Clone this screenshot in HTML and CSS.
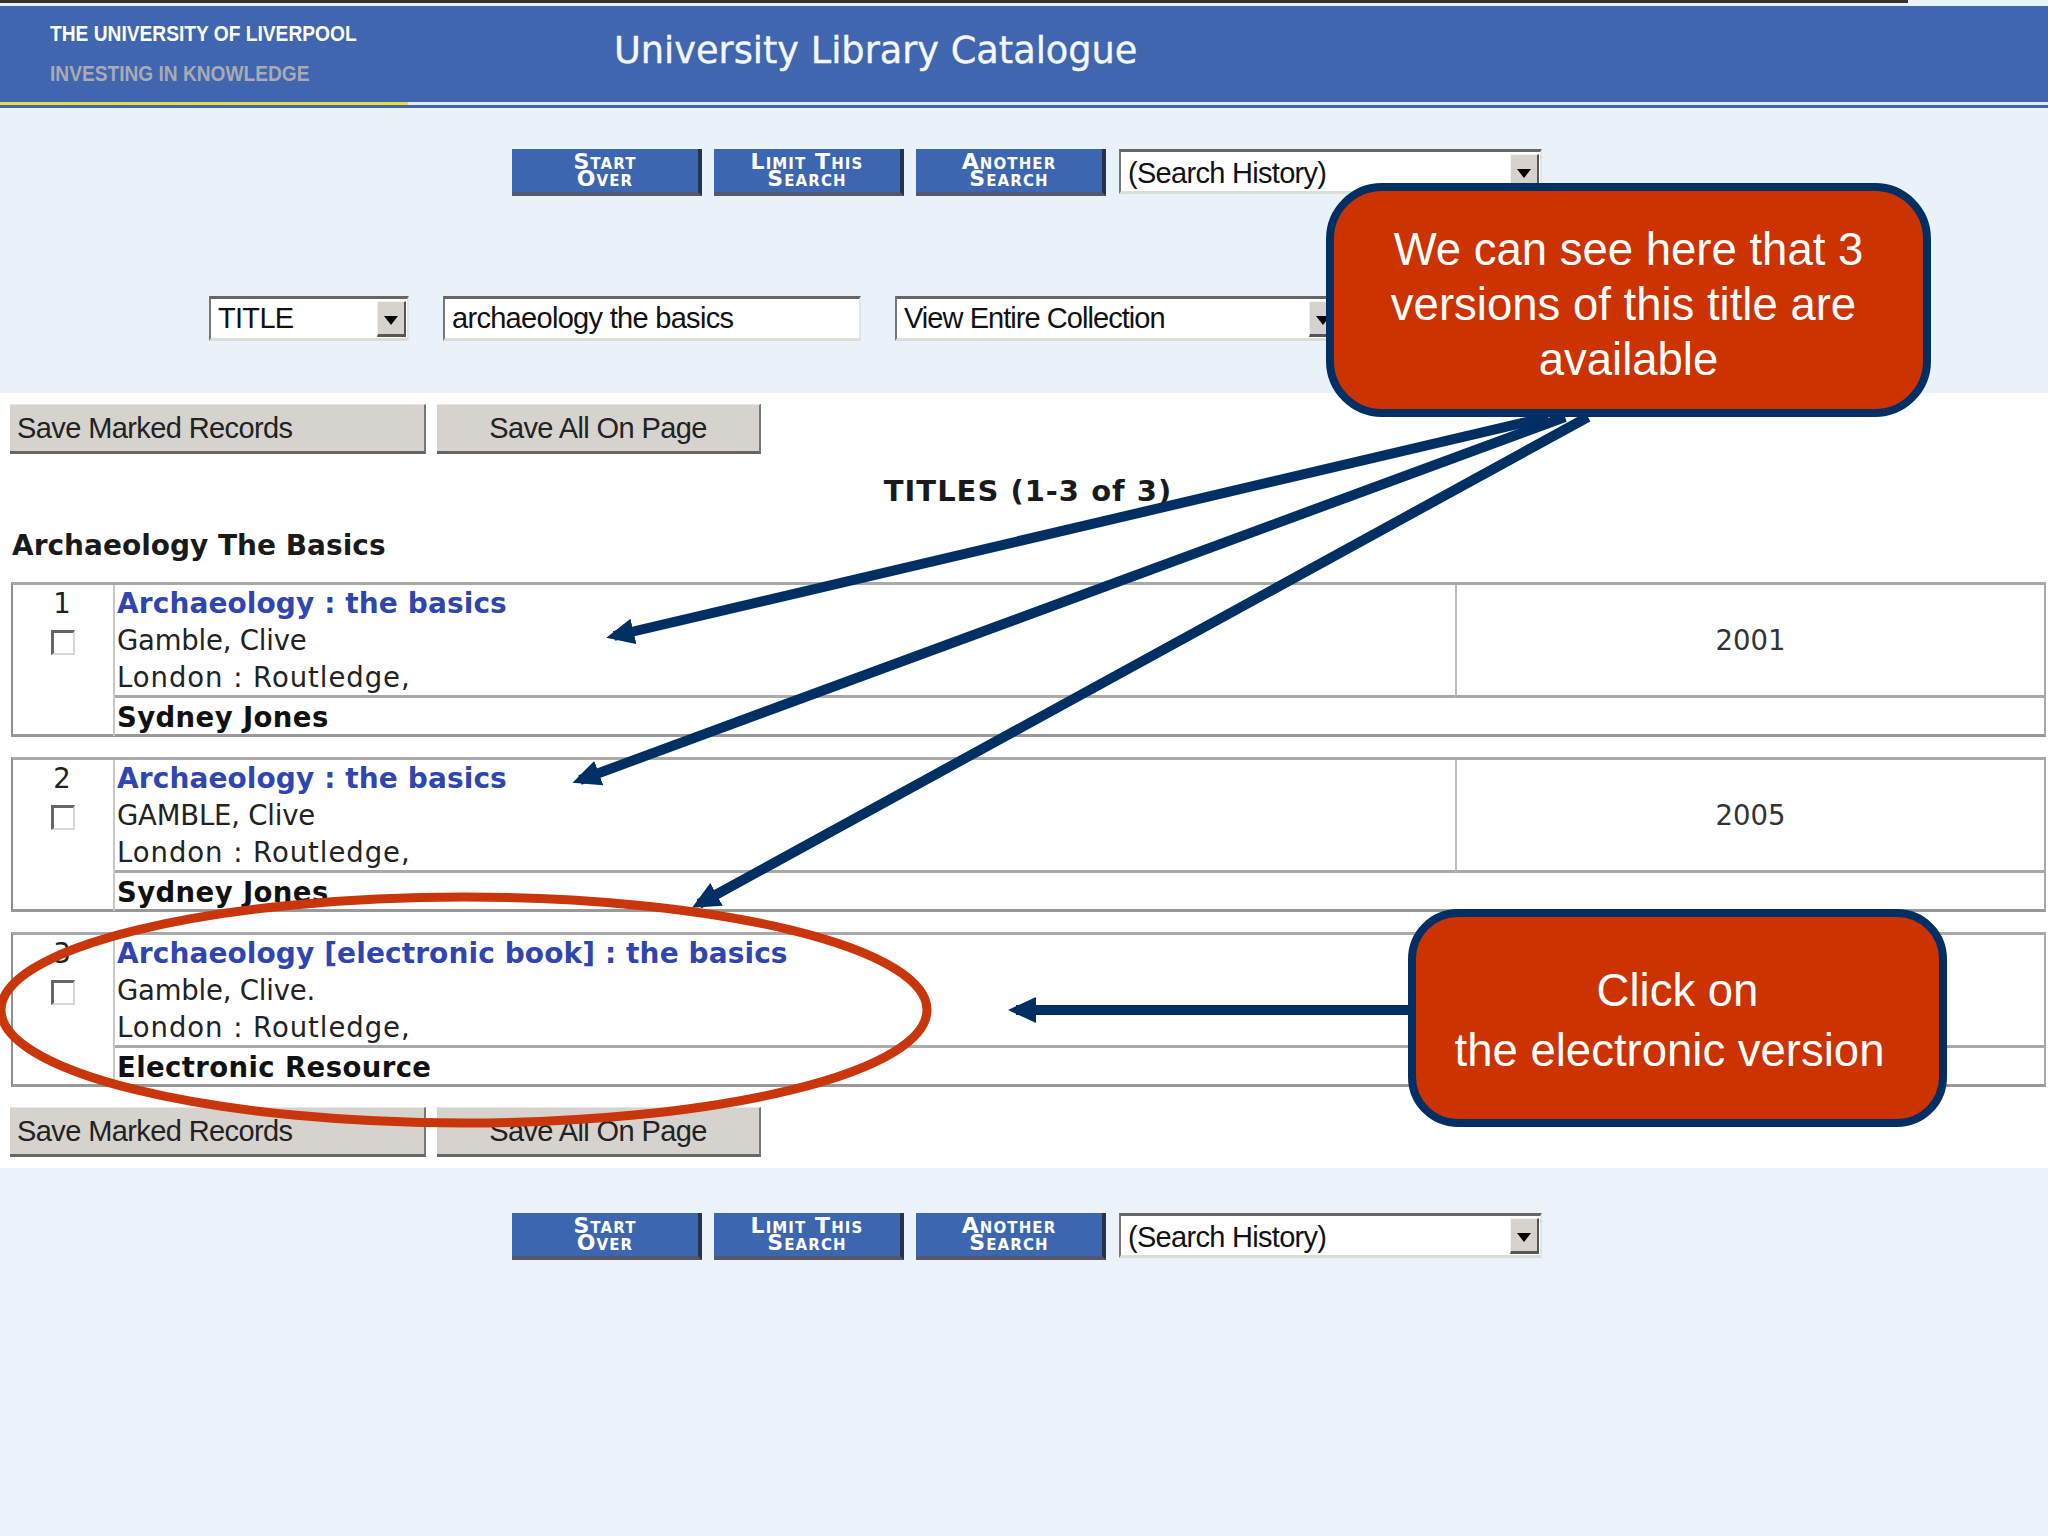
FILE: index.html
```html
<!DOCTYPE html>
<html lang="en">
<head>
<meta charset="utf-8">
<title>University Library Catalogue</title>
<link rel="stylesheet" href="styles.css">
</head>
<body>
<div class="page">
  <div class="topline"></div>
  <header class="header">
    <div class="banner">
      <div class="brand">
        <div class="uni">THE UNIVERSITY OF LIVERPOOL</div>
        <div class="motto">INVESTING IN KNOWLEDGE</div>
      </div>
      <h1 class="cat">University Library Catalogue</h1>
    </div>
    <div class="rule"><span class="rule-y"></span></div>
  </header>

  <section class="pale">
    <nav class="nav">
      <a class="navbtn"><span>Start</span><span>Over</span></a>
      <a class="navbtn"><span>Limit This</span><span>Search</span></a>
      <a class="navbtn"><span>Another</span><span>Search</span></a>
      <div class="field sel-hist"><span>(Search History)</span><i class="drop"></i></div>
    </nav>
    <div class="search">
      <div class="field sel-title"><span>TITLE</span><i class="drop"></i></div>
      <div class="field inp"><span>archaeology the basics</span></div>
      <div class="field sel-coll"><span>View Entire Collection</span><i class="drop"></i></div>
    </div>
  </section>

  <main class="white">
    <div class="saves">
      <div class="savebtn save-a">Save Marked Records</div>
      <div class="savebtn save-b">Save All On Page</div>
    </div>
    <div class="titles">TITLES (1-3 of 3)</div>
    <h2 class="heading">Archaeology The Basics</h2>

    <article class="rec">
      <div class="c-num"><div class="num">1</div><div class="check"></div></div>
      <div class="c-main"><a class="t">Archaeology : the basics</a><div class="l">Gamble, Clive</div><div class="l pub">London : Routledge,</div></div>
      <div class="c-year">2001</div>
      <div class="c-loc">Sydney Jones</div>
    </article>
    <article class="rec">
      <div class="c-num"><div class="num">2</div><div class="check"></div></div>
      <div class="c-main"><a class="t">Archaeology : the basics</a><div class="l">GAMBLE, Clive</div><div class="l pub">London : Routledge,</div></div>
      <div class="c-year">2005</div>
      <div class="c-loc">Sydney Jones</div>
    </article>
    <article class="rec">
      <div class="c-num"><div class="num">3</div><div class="check"></div></div>
      <div class="c-main"><a class="t">Archaeology [electronic book] : the basics</a><div class="l">Gamble, Clive.</div><div class="l pub">London : Routledge,</div></div>
      <div class="c-year"></div>
      <div class="c-loc">Electronic Resource</div>
    </article>

    <div class="saves saves-end">
      <div class="savebtn save-a">Save Marked Records</div>
      <div class="savebtn save-b">Save All On Page</div>
    </div>
  </main>

  <section class="pale pale-end">
    <nav class="nav">
      <a class="navbtn"><span>Start</span><span>Over</span></a>
      <a class="navbtn"><span>Limit This</span><span>Search</span></a>
      <a class="navbtn"><span>Another</span><span>Search</span></a>
      <div class="field sel-hist"><span>(Search History)</span><i class="drop"></i></div>
    </nav>
  </section>

  <svg class="overlay" width="2048" height="1536" viewBox="0 0 2048 1536" aria-hidden="true">
    <defs>
      <marker id="head" markerUnits="userSpaceOnUse" markerWidth="28" markerHeight="26" viewBox="0 0 28 26" refX="20" refY="13" orient="auto">
        <path d="M0 0 L28 13 L0 26 Z" fill="#003063"/>
      </marker>
    </defs>
    <g class="arrows">
      <line x1="1548" y1="417" x2="614" y2="636" marker-end="url(#head)"/>
      <line x1="1565" y1="417" x2="580" y2="780" marker-end="url(#head)"/>
      <line x1="1588" y1="417" x2="699" y2="904" marker-end="url(#head)"/>
      <line x1="1410" y1="1010" x2="1016" y2="1010" marker-end="url(#head)"/>
    </g>
    <ellipse class="ring" cx="464" cy="1010" rx="463" ry="113"/>
  </svg>

  <aside class="callout callout-a"><span>We can see here that 3</span><span class="ca2">versions of this title are</span><span>available</span></aside>
  <aside class="callout callout-b"><span>Click on</span><span class="cb2">the electronic version</span></aside>
</div>
</body>
</html>
```

FILE: styles.css
```css
* { box-sizing: border-box; }
html, body { margin: 0; padding: 0; }
body { background: #e9f1f9; }

.page {
  position: relative;
  width: 2048px;
  height: 1536px;
  overflow: hidden;
  display: flex;
  flex-direction: column;
  font-family: "Liberation Sans", Arial, sans-serif;
  color: #111;
}

.topline {
  height: 6px;
  width: 100%;
  background: linear-gradient(to bottom, #333 0, #333 3px, #e9f1f9 3px);
  background-size: 1908px 100%;
  background-repeat: no-repeat;
}

.header { height: 102px; background: #3f66ae; display: flex; flex-direction: column; }
.banner { height: 96px; display: flex; }
.brand { width: 614px; padding: 0 0 0 50px; font-weight: 700; }
.uni { color: #fff; font-size: 22px; line-height: 28px; margin-top: 14px; white-space: nowrap; transform: scaleX(.872); transform-origin: left center; }
.motto { color: #a9aab4; font-size: 22px; line-height: 28px; margin-top: 12px; white-space: nowrap; transform: scaleX(.87); transform-origin: left center; }
.cat { margin: 0; font-family: "DejaVu Sans", sans-serif; font-weight: 400; font-size: 36.7px; line-height: 40px; color: #f4f7fb; padding-top: 25px; white-space: nowrap; -webkit-text-stroke: .4px #f4f7fb; }
.rule { height: 3px; background: #dfe9f8; }
.rule-y { display: block; width: 408px; height: 3px; background: #e6df3a; }

.pale { background: #e9f1f9; height: 285px; padding-top: 41px; }
.pale-end { flex: 1; padding-top: 45px; background: #ebf2f9; }

.nav { display: flex; align-items: flex-start; padding-left: 512px; gap: 12px; }
.navbtn {
  width: 190px;
  height: 47px;
  padding-bottom: 2px;
  background: #3d66b0;
  border-right: 4px solid #26334f;
  border-bottom: 4px solid #55586a;
  color: #fff;
  text-align: center;
  font-family: "DejaVu Sans", sans-serif;
  font-weight: 700;
  font-size: 22px;
  letter-spacing: 1.1px;
  font-variant: small-caps;
  display: flex;
  flex-direction: column;
  align-items: center;
  justify-content: center;
}
.navbtn span { display: block; height: 17px; line-height: 17px; white-space: nowrap; }

.field {
  position: relative;
  height: 45px;
  display: flex;
  align-items: center;
  background: #fff;
  border-top: 3px solid #666;
  border-left: 2px solid #777;
  border-right: 2px solid #e3e6e8;
  border-bottom: 3px solid #dcdcd8;
  font-size: 29px;
  letter-spacing: -.7px;
  color: #111;
  white-space: nowrap;
}
.field span { padding-left: 7px; }
.drop {
  position: absolute;
  top: 2px;
  right: 1px;
  bottom: 1px;
  width: 29px;
  background: #d6d3ce;
  border-top: 1px solid #f2f2f0;
  border-left: 1px solid #f2f2f0;
  border-right: 2px solid #555;
  border-bottom: 3px solid #555;
}
.drop::after {
  content: "";
  position: absolute;
  left: 6px;
  top: 14px;
  border-left: 7px solid transparent;
  border-right: 7px solid transparent;
  border-top: 9px solid #000;
}
.sel-hist { width: 423px; margin-left: 1px; }
.sel-hist span { padding-top: 3px; }
.search { display: flex; padding-left: 209px; margin-top: 100px; gap: 34px; }
.sel-title { width: 200px; }
.inp { width: 418px; }
.sel-coll { width: 446px; letter-spacing: -.95px; }

.white { background: #fff; height: 775px; padding: 11px 2px 0 10px; }
.saves { display: flex; gap: 11px; height: 50px; }
.saves-end { margin-top: 20px; }
.savebtn {
  height: 50px;
  display: flex;
  align-items: center;
  background: #d6d3ce;
  border-top: 1px solid #e8e6e0;
  border-right: 2px solid #777;
  border-bottom: 3px solid #666;
  font-size: 29px;
  letter-spacing: -.6px;
  color: #222;
  white-space: nowrap;
}
.save-a { width: 416px; padding-left: 7px; }
.save-b { width: 324px; justify-content: center; }

.titles {
  margin-top: 20px;
  height: 34px;
  line-height: 34px;
  text-align: center;
  font-family: "DejaVu Sans", sans-serif;
  font-weight: 700;
  font-size: 29px;
  letter-spacing: 1px;
  color: #1a1a1a;
}
.heading {
  margin: 21px 0 19px;
  height: 34px;
  line-height: 34px;
  font-family: "DejaVu Sans", sans-serif;
  font-weight: 700;
  font-size: 28px;
  color: #1a1a1a;
  padding-left: 2px;
  white-space: nowrap;
}

.rec {
  height: 155px;
  margin-bottom: 20px;
  margin-left: 1px;
  display: grid;
  grid-template-columns: 102px 1340px 1fr;
  grid-template-rows: 113px 1fr;
  border-top: 3px solid #a9aaa8;
  border-left: 2px solid #8f908e;
  border-right: 2px solid #a9aaa8;
  border-bottom: 3px solid #999;
  font-family: "DejaVu Sans", sans-serif;
  font-size: 27.5px;
  line-height: 37px;
}
.rec:nth-of-type(3) { margin-bottom: 0; }
.c-num { grid-row: 1 / 3; border-right: 2px solid #c8c8c6; text-align: center; display: flex; flex-direction: column; align-items: center; }
.num { line-height: 37px; color: #222; transform: translateX(-1px); }
.check { width: 24px; height: 25px; margin-top: 8px; background: #fff; border-top: 3px solid #666; border-left: 3px solid #666; border-right: 2px solid #d8d8d6; border-bottom: 2px solid #d8d8d6; }
.c-main { padding-left: 2px; border-bottom: 3px solid #a9aaa8; color: #222; white-space: nowrap; letter-spacing: -.2px; }
.t { display: block; color: #2f45b0; font-weight: 700; font-size: 28px; letter-spacing: .1px; }
.pub { letter-spacing: .95px; }
.c-year { border-left: 2px solid #bcbcba; border-bottom: 3px solid #a9aaa8; display: flex; align-items: center; justify-content: center; color: #333; }
.c-loc { grid-column: 2 / 4; padding-left: 2px; font-weight: 700; color: #111; line-height: 38px; letter-spacing: .4px; }

.overlay { position: absolute; left: 0; top: 0; pointer-events: none; }
.arrows line { stroke: #003063; stroke-width: 10; }
.ring { fill: none; stroke: #c9360c; stroke-width: 9; }

.callout {
  position: absolute;
  background: #cc3300;
  border: 8px solid #003063;
  color: #fff;
  text-align: center;
  font-size: 45.5px;
}
.callout span { display: block; }
.callout-a {
  left: 1326px;
  top: 183px;
  width: 605px;
  height: 234px;
  border-radius: 56px;
  line-height: 55px;
  padding-top: 31px;
}
.ca2 { margin-right: 10px; }
.callout-b {
  left: 1408px;
  top: 909px;
  width: 539px;
  height: 218px;
  border-radius: 50px;
  line-height: 60px;
  padding-top: 44px;
}
.cb2 { margin-right: 16px; }
```
